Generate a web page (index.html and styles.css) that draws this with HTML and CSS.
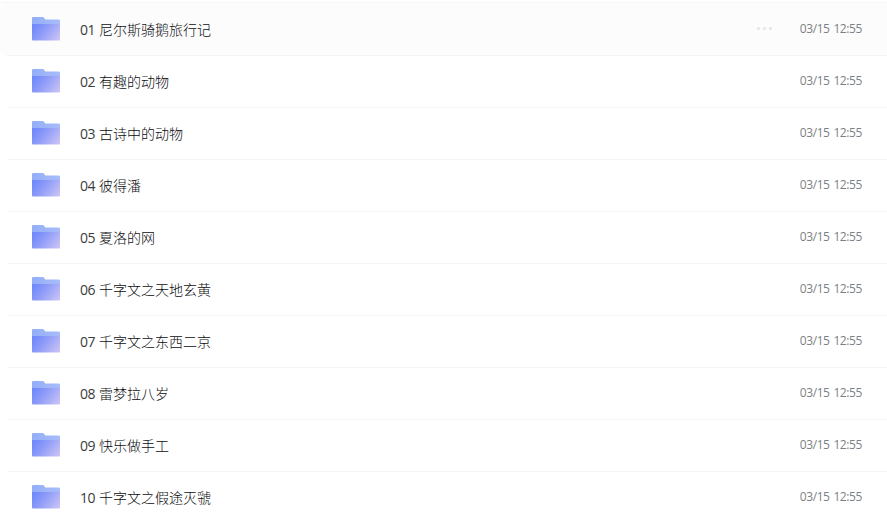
FILE: index.html
```html
<!DOCTYPE html>
<html lang="zh-CN">
<head>
    <meta charset="UTF-8">
    <meta name="viewport" content="width=device-width, initial-scale=1.0">
    <title>文件列表</title>
    <link rel="stylesheet" href="styles.css">
</head>
<body>
    <svg class="defs" width="0" height="0">
        <defs>
            <linearGradient id="folderFront" x1="0" y1="0.3" x2="1" y2="0.75">
                <stop offset="0" stop-color="#7189fa"/>
                <stop offset="0.45" stop-color="#939ff7"/>
                <stop offset="1" stop-color="#c6c1f6"/>
            </linearGradient>
            <linearGradient id="folderBack" x1="0" y1="0" x2="1" y2="0">
                <stop offset="0" stop-color="#92aef8"/>
                <stop offset="1" stop-color="#a9bcfa"/>
            </linearGradient>
            <symbol id="folder" viewBox="0 0 28 25">
                <path d="M0 2.2Q0 1 1.2 1H10.5Q11.5 1 12.1 1.7L13.2 3.6H26.8Q28 3.6 28 4.8V12H0Z" fill="url(#folderBack)"/>
                <path d="M0 8H28V23.6Q28 24.5 27 24.5H1Q0 24.5 0 23.6Z" fill="url(#folderFront)"/>
            </symbol>
        </defs>
    </svg>

    <ul class="file-list" id="fileList"></ul>

    <script>
        const files = [
            { no: '01', name: '尼尔斯骑鹅旅行记', active: true },
            { no: '02', name: '有趣的动物' },
            { no: '03', name: '古诗中的动物' },
            { no: '04', name: '彼得潘' },
            { no: '05', name: '夏洛的网' },
            { no: '06', name: '千字文之天地玄黄' },
            { no: '07', name: '千字文之东西二京' },
            { no: '08', name: '雷梦拉八岁' },
            { no: '09', name: '快乐做手工' },
            { no: '10', name: '千字文之假途灭虢' }
        ];

        const list = document.getElementById('fileList');

        for (const file of files) {
            const row = document.createElement('li');
            row.classList.add('file-row');
            if (file.active) {
                row.classList.add('active');
            }
            row.innerHTML = `
                <div class="file-inner">
                    <svg class="folder-icon"><use href="#folder"/></svg>
                    <div class="file-name"><span class="file-no">${file.no} </span>${file.name}</div>
                    ${file.active ? '<div class="more"><i></i><i></i><i></i></div>' : ''}
                    <div class="file-date">03/15 12:55</div>
                </div>`;
            list.appendChild(row);
        }
    </script>
</body>
</html>
```
FILE: styles.css
```css
body {
    margin: 0;
    background: #fff;
    color: #0c0d10;
    font-family: "Open Sans", "Noto Sans", "Noto Sans CJK SC", sans-serif;
    font-weight: 300;
    overflow: hidden;
}

.defs {
    display: block;
}

.file-list {
    list-style: none;
    margin: 2px 0 0;
    padding: 0;
    border-top: 1px solid #f6f6f7;
}

.file-row {
    height: 52px;
    padding-left: 8px;
}

.file-row.active {
    height: 53px;
    background: #fcfcfc;
    border-radius: 6px 0 0 6px;
}

.file-inner {
    box-sizing: border-box;
    height: 100%;
    padding: 0 25px 2px 24px;
    display: flex;
    align-items: center;
    border-bottom: 1px solid #f4f4f5;
}

.active .file-inner {
    padding-bottom: 1px;
}

.folder-icon {
    width: 28px;
    height: 25px;
    margin-right: 20px;
}

.file-name {
    flex: 1;
    font-size: 14px;
    line-height: 20px;
    padding-top: 2px;
    white-space: pre;
}

.file-no {
    font-weight: 400;
    letter-spacing: -0.5px;
    word-spacing: 0.8px;
    color: #3a3c40;
}

.more {
    display: flex;
    gap: 3px;
    margin-right: 28px;
}

.more i {
    width: 3px;
    height: 3px;
    border-radius: 50%;
    background: #e4e5e7;
}

.file-date {
    font-size: 12px;
    line-height: 18px;
    letter-spacing: -0.4px;
    word-spacing: 1.1px;
    font-weight: 400;
    color: #7d7f83;
}
```
